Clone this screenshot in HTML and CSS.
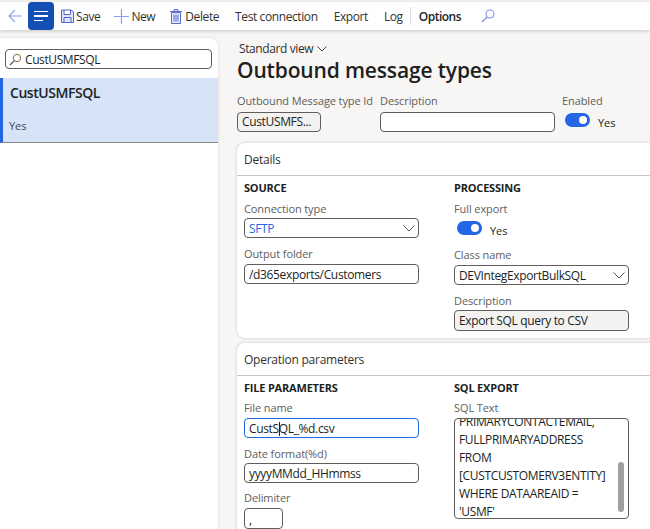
FILE: index.html
```html
<!DOCTYPE html>
<html lang="en">
<head>
	<meta charset="UTF-8">
	<title>Outbound message types</title>
	<link rel="stylesheet" href="styles.css">
</head>
<body>
<div class="toolbar">
	<svg class="ico back" width="16" height="16" viewBox="0 0 16 16"><path d="M15 8H2M8 2L2 8l6 6" fill="none" stroke="#8a9ff0" stroke-width="1.1"/></svg>
	<div class="menu-btn"><span class="l1"></span><span class="l2"></span><span class="l3"></span></div>
	<div class="tool save">
		<svg width="13" height="14" viewBox="0 0 13 14"><path d="M.5 1h10l2 2v10.500H.5zM3 1v4.500h6.500V1M3 13.500V8.500h7v5" fill="#dfe6fb" stroke="#4f68c8"/></svg>
		Save
	</div>
	<div class="tool new">
		<svg width="15" height="15" viewBox="0 0 15 15"><path d="M7.500 0v15M0 7.500h15" stroke="#8a9ff0" stroke-width="1.200"/></svg>
		New
	</div>
	<div class="tool del">
		<svg width="12" height="15" viewBox="0 0 12 15"><path d="M1.500 3.500h9v11h-9zM0 2.500h12M4 2.500V.5h4v2M4 5.500v7M6 5.500v7M8 5.500v7" fill="#e6e9fb" stroke="#5b6fc8"/></svg>
		Delete
	</div>
	<div class="tool test">Test connection</div>
	<div class="tool export">Export</div>
	<div class="tool log">Log</div>
	<div class="divider"></div>
	<div class="tool options">Options</div>
	<svg class="find" width="14" height="14" viewBox="0 0 14 14"><circle cx="9" cy="5" r="4" fill="none" stroke="#7f8cec" stroke-width="1.100"/><path d="M6 8l-5 5" stroke="#7f8cec" stroke-width="1.300"/></svg>
</div>

<div class="content">
	<div class="side">
		<div class="search">
			<svg width="13" height="13" viewBox="0 0 13 13"><circle cx="8" cy="5" r="3.700" fill="none" stroke="#8b6d3f"/><path d="M5.300 7.700L1 12" stroke="#555" stroke-width="1.200"/></svg>
			<span>CustUSMFSQL</span>
		</div>
		<div class="item">
			<div class="item-title">CustUSMFSQL</div>
			<div class="item-sub">Yes</div>
		</div>
	</div>

	<div class="main">
		<div class="view">Standard view
			<svg width="10" height="6" viewBox="0 0 10 6"><path d="M.5.5L5 5 9.500.5" fill="none" stroke="#444"/></svg>
		</div>
		<h1>Outbound message types</h1>

		<div class="head-row">
			<div class="f-id">
				<label>Outbound Message type Id</label>
				<div class="input id-input">CustUSMFS...</div>
			</div>
			<div class="f-desc">
				<label>Description</label>
				<div class="input"></div>
			</div>
			<div class="f-en">
				<label>Enabled</label>
				<div class="toggle-row"><span class="toggle"></span>Yes</div>
			</div>
		</div>

		<div class="card details">
			<div class="card-head">Details</div>
			<div class="cols">
				<div class="col">
					<h3>SOURCE</h3>
					<label>Connection type</label>
					<div class="input select sftp">SFTP<svg width="12" height="7" viewBox="0 0 12 7"><path d="M.5.5L6 6 11.500.5" fill="none" stroke="#555"/></svg></div>
					<label class="folder-label">Output folder</label>
					<div class="input">/d365exports/Customers</div>
				</div>
				<div class="col">
					<h3>PROCESSING</h3>
					<label>Full export</label>
					<div class="toggle-row full"><span class="toggle"></span>Yes</div>
					<label class="class-label">Class name</label>
					<div class="input select">DEVIntegExportBulkSQL<svg width="12" height="7" viewBox="0 0 12 7"><path d="M.5.5L6 6 11.500.5" fill="none" stroke="#555"/></svg></div>
					<label class="desc-label">Description</label>
					<div class="input readonly">Export SQL query to CSV</div>
				</div>
			</div>
		</div>

		<div class="card ops">
			<div class="card-head">Operation parameters</div>
			<div class="cols">
				<div class="col">
					<h3>FILE PARAMETERS</h3>
					<label>File name</label>
					<div class="input focused">CustS<span class="caret"></span>QL_%d.csv</div>
					<label class="date-label">Date format(%d)</label>
					<div class="input">yyyyMMdd_HHmmss</div>
					<label class="delim-label">Delimiter</label>
					<div class="input delim">,</div>
				</div>
				<div class="col">
					<h3>SQL EXPORT</h3>
					<label>SQL Text</label>
					<div class="sql">
						<div class="sql-text">PRIMARYCONTACTEMAIL,<br>FULLPRIMARYADDRESS<br>FROM<br>[CUSTCUSTOMERV3ENTITY]<br>WHERE DATAAREAID =<br>'USMF'</div>
						<span class="thumb"></span>
					</div>
				</div>
			</div>
		</div>
	</div>
</div>
</body>
</html>
```

FILE: styles.css
```css
html,body{margin:0;height:100%;overflow:hidden;}
body{background:#f7f6f4;font-family:"Open Sans","Noto Sans","Liberation Sans",sans-serif;font-size:11px;color:#201f1e;letter-spacing:-0.1px;}
svg{display:block;flex:none;}

.toolbar{height:28px;margin-top:2px;background:#fff;box-shadow:0 1px 4px rgba(0,0,0,0.2);display:flex;align-items:center;position:relative;}
.toolbar .back{margin-left:7px;}
.menu-btn{width:26px;height:28px;background:#1450b4;border-radius:4px;margin-left:5px;display:flex;flex-direction:column;justify-content:center;gap:3px;padding-left:6px;box-sizing:border-box;}
.menu-btn span{display:block;height:1.5px;background:#fff;}
.menu-btn .l1{width:14px;}
.menu-btn .l2{width:14px;}
.menu-btn .l3{width:9px;}
.tool{display:flex;align-items:center;gap:2px;font-size:12px;color:#323130;white-space:nowrap;letter-spacing:-0.4px;}
.save{margin-left:7px;}
.new{margin-left:14px;}
.del{margin-left:15px;gap:3px;}
.test{margin-left:16px;}
.export{margin-left:16px;}
.log{margin-left:16px;}
.divider{width:1px;height:18px;background:#ddd;margin-left:7px;}
.options{margin-left:8px;color:#201f1e;font-weight:600;letter-spacing:-0.5px;}
.find{margin-left:20px;}

.content{display:flex;height:499px;padding-top:8px;box-sizing:border-box;}
.side{width:218px;background:#fff;border-radius:0 8px 0 0;box-shadow:0 0 3px rgba(0,0,0,0.15);flex:none;padding-top:11px;box-sizing:border-box;}
.search{height:20px;margin:0 6px 0 5px;border:1px solid #605e5c;border-radius:4px;box-sizing:border-box;display:flex;align-items:center;padding-left:3px;gap:3px;font-size:12px;letter-spacing:-0.4px;}
.item{margin-top:9px;height:65px;background:#d7e4f8;border-left:3px solid #2266e3;border-bottom:1px solid #8a8886;box-sizing:border-box;position:relative;padding:5px 0 0 7px;}
.item-title{font-size:14px;font-weight:600;line-height:20px;letter-spacing:-0.45px;}
.item-sub{font-size:11px;color:#484644;margin-top:15px;margin-left:-1px;line-height:15px;}

.main{margin-left:19px;flex:1;min-width:0;padding-top:3px;}
.view{display:flex;align-items:center;gap:4px;font-size:12px;line-height:16px;padding-left:2px;color:#323130;letter-spacing:-0.4px;}
h1{margin:-1px 0 0;font-size:21px;line-height:28px;font-weight:600;color:#201f1e;white-space:nowrap;letter-spacing:-0.15px;}
label{display:block;color:#605e5c;font-size:11px;line-height:15px;white-space:nowrap;}
.input{height:20px;border:1px solid #605e5c;border-radius:4px;background:#fff;box-sizing:border-box;font-size:12px;line-height:18px;padding-left:4px;white-space:nowrap;position:relative;letter-spacing:-0.35px;}

.head-row{display:flex;margin-top:9px;height:50px;}
.head-row label{margin-bottom:4px;}
.f-id{width:143px;}
.id-input{width:84px;background:#f3f2f1;}
.f-desc{width:182px;}
.f-desc .input{width:175px;}
.toggle-row{display:flex;align-items:center;gap:8px;font-size:11px;height:20px;padding-left:3px;}
.toggle{width:25px;height:14px;border-radius:7px;background:#2266e3;position:relative;display:block;margin-top:-4px;}
.toggle:after{content:'';position:absolute;right:3px;top:3px;width:8px;height:8px;border-radius:50%;background:#fff;}

.card{background:#fff;border-radius:8px 0 0 8px;box-shadow:0 0 3px rgba(0,0,0,0.2);margin-right:-10px;}
.details{height:195px;}
.ops{height:200px;margin-top:5px;}
.card-head{height:33px;line-height:34px;border-bottom:1px solid #c8c6c4;padding-left:7px;font-size:12px;box-sizing:border-box;color:#323130;letter-spacing:-0.25px;}
.cols{display:flex;padding-left:7px;}
.col{width:210px;flex:none;}
.col h3{margin:4px 0 6px;font-size:11px;line-height:15px;font-weight:700;color:#201f1e;letter-spacing:-0.2px;}
.col label{margin-bottom:2px;}
.col .input{width:175px;line-height:20px;}
.select svg{position:absolute;right:3px;top:6px;}
.sftp{color:#2266e3;}
.col .readonly{background:#f3f2f1;height:21px;}
.col .folder-label{margin-top:8px;margin-bottom:3px;}
.col .class-label{margin-top:5px;margin-bottom:3px;}
.col .desc-label{margin-top:8px;margin-bottom:2px;}
.col .date-label{margin-top:8px;margin-bottom:2px;}
.col .delim-label{margin-top:7px;margin-bottom:3px;}
.full{height:24px;}
.ops .col h3{margin-bottom:5px;}
.ops .col label:first-of-type{margin-bottom:3px;}
.focused{border-color:#2266e3;}
.caret{display:inline-block;width:1px;height:14px;background:#201f1e;vertical-align:-3px;margin-right:-1px;}
.col .delim{width:39px;height:21px;line-height:22px;}
.sql{width:175px;height:101px;border:1px solid #605e5c;border-radius:4px;box-sizing:border-box;overflow:hidden;position:relative;}
.sql-text{font-size:12px;line-height:18px;padding-left:4px;margin-top:-6px;white-space:nowrap;letter-spacing:-0.35px;}
.thumb{position:absolute;right:4px;top:43px;width:6px;height:50px;border-radius:3px;background:#a19f9d;}
```
